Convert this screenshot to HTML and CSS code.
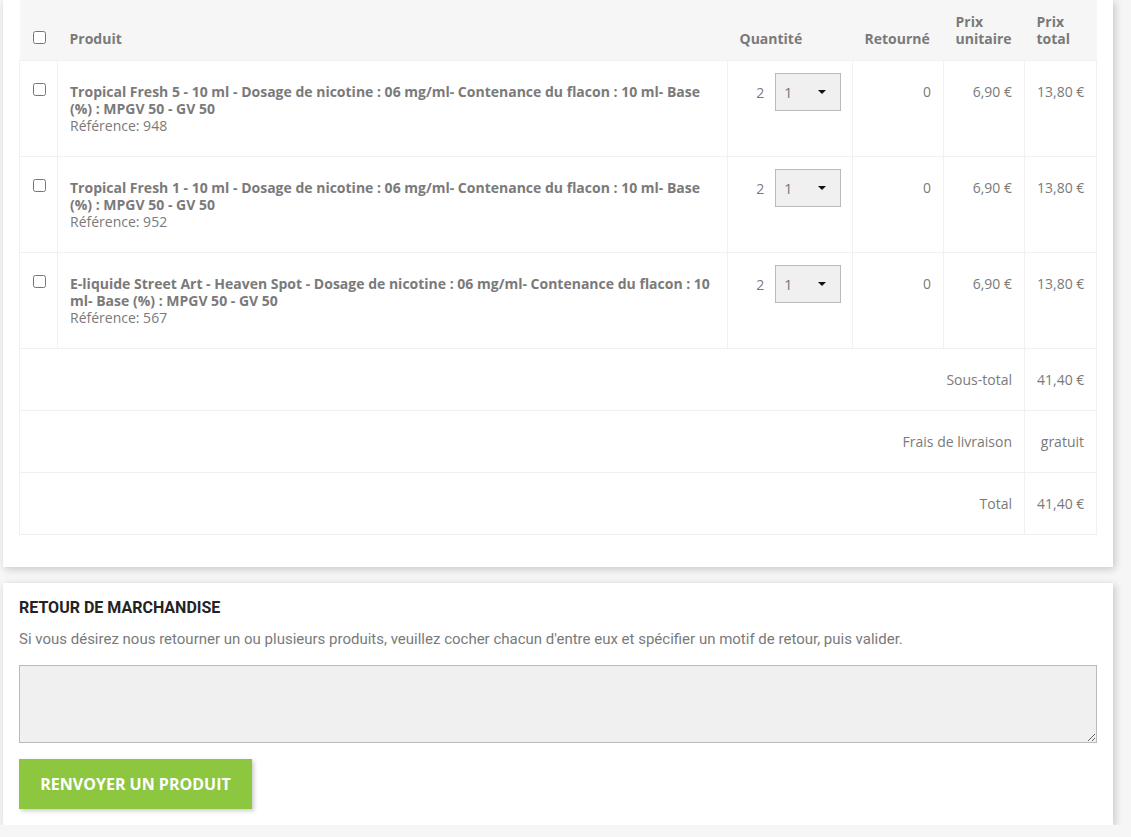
FILE: index.html
```html
<!DOCTYPE html>
<html lang="fr">
<head>
  <meta charset="UTF-8" />
  <meta name="viewport" content="width=device-width, initial-scale=1.0"/>
  <title>Détail de la commande</title>
  <link rel="stylesheet" href="styles.css">
</head>
<body>
  <div class="page">
    <div class="box order-box">
      <table class="order-table">
        <colgroup>
          <col class="col-check">
          <col>
          <col class="col-qty">
          <col class="col-ret">
          <col class="col-unit">
          <col class="col-total">
        </colgroup>
        <thead>
          <tr>
            <th class="check"><input type="checkbox"></th>
            <th>Produit</th>
            <th>Quantité</th>
            <th>Retourné</th>
            <th>Prix unitaire</th>
            <th>Prix total</th>
          </tr>
        </thead>
        <tbody>
          <tr class="item">
            <td class="check"><input type="checkbox"></td>
            <td class="product">
              <strong>Tropical Fresh 5 - 10 ml - Dosage de nicotine : 06 mg/ml- Contenance du flacon : 10 ml- Base (%) : MPGV 50 - GV 50</strong><br>
              Référence: 948
            </td>
            <td class="qty">
              <span class="qty-count">2</span>
              <span class="select-wrap">
                <select><option>1</option><option>2</option></select>
                <svg class="caret" width="8" height="4" viewBox="0 0 8 4"><path d="M0 0h8L4 4z"/></svg>
              </span>
            </td>
            <td class="num">0</td>
            <td class="num">6,90 €</td>
            <td class="num">13,80 €</td>
          </tr>
          <tr class="item">
            <td class="check"><input type="checkbox"></td>
            <td class="product">
              <strong>Tropical Fresh 1 - 10 ml - Dosage de nicotine : 06 mg/ml- Contenance du flacon : 10 ml- Base (%) : MPGV 50 - GV 50</strong><br>
              Référence: 952
            </td>
            <td class="qty">
              <span class="qty-count">2</span>
              <span class="select-wrap">
                <select><option>1</option><option>2</option></select>
                <svg class="caret" width="8" height="4" viewBox="0 0 8 4"><path d="M0 0h8L4 4z"/></svg>
              </span>
            </td>
            <td class="num">0</td>
            <td class="num">6,90 €</td>
            <td class="num">13,80 €</td>
          </tr>
          <tr class="item">
            <td class="check"><input type="checkbox"></td>
            <td class="product">
              <strong>E-liquide Street Art - Heaven Spot - Dosage de nicotine : 06 mg/ml- Contenance du flacon : 10 ml- Base (%) : MPGV 50 - GV 50</strong><br>
              Référence: 567
            </td>
            <td class="qty">
              <span class="qty-count">2</span>
              <span class="select-wrap">
                <select><option>1</option><option>2</option></select>
                <svg class="caret" width="8" height="4" viewBox="0 0 8 4"><path d="M0 0h8L4 4z"/></svg>
              </span>
            </td>
            <td class="num">0</td>
            <td class="num">6,90 €</td>
            <td class="num">13,80 €</td>
          </tr>
        </tbody>
        <tfoot>
          <tr class="line-total">
            <td colspan="5" class="label">Sous-total</td>
            <td class="num">41,40 €</td>
          </tr>
          <tr class="line-total">
            <td colspan="5" class="label">Frais de livraison</td>
            <td class="num">gratuit</td>
          </tr>
          <tr class="line-total">
            <td colspan="5" class="label">Total</td>
            <td class="num">41,40 €</td>
          </tr>
        </tfoot>
      </table>
    </div>

    <div class="box return-box">
      <h3>Retour de marchandise</h3>
      <p>Si vous désirez nous retourner un ou plusieurs produits, veuillez cocher chacun d'entre eux et spécifier un motif de retour, puis valider.</p>
      <textarea rows="3"></textarea>
      <button type="submit">Renvoyer un produit</button>
    </div>
  </div>
</body>
</html>
```

FILE: styles.css
```css
* { box-sizing: border-box; }

body {
  margin: 0;
  background-color: #f6f6f6;
  font-family: 'Open Sans', sans-serif;
  font-size: 14px;
  color: #7a7a7a;
}

.page {
  width: 1110px;
  margin-left: 3px;
}

.box {
  background: #fff;
  box-shadow: 2px 2px 8px 0 rgba(0, 0, 0, 0.2);
  padding: 16px;
}

.order-box {
  padding-top: 0;
  padding-bottom: 32px;
}

.order-table {
  width: 100%;
  border-collapse: collapse;
  table-layout: fixed;
  line-height: 17px;
}

.col-check { width: 38px; }
.col-qty { width: 125px; }
.col-ret { width: 91px; }
.col-unit { width: 81px; }
.col-total { width: 72px; }

.order-table th {
  background-color: #f6f6f6;
  height: 60px;
  padding: 0 12px 13px;
  text-align: left;
  vertical-align: bottom;
  font-weight: 700;
  color: #7a7a7a;
}

.order-table th.check,
.order-table td.check {
  padding-left: 13px;
  padding-right: 0;
}

.order-table input[type="checkbox"] {
  width: 13px;
  height: 13px;
  margin: 0;
  vertical-align: top;
}

.order-table th.check {
  padding-bottom: 12px;
}

.order-table td {
  border: 1px solid #f0f0f0;
  padding: 22px 12px;
  vertical-align: top;
}

.product strong {
  font-weight: 700;
}

.qty {
  text-align: right;
  white-space: nowrap;
  padding-top: 12px !important;
  padding-bottom: 0 !important;
  padding-right: 11px !important;
}

.qty-count {
  margin-right: 7px;
}

.select-wrap {
  position: relative;
  display: inline-block;
}

.select-wrap select {
  -webkit-appearance: none;
  appearance: none;
  width: 66px;
  height: 38px;
  padding: 0 8px;
  border: 1px solid #bbb;
  border-radius: 0;
  background: #f0f0f0;
  font-family: 'Open Sans', sans-serif;
  font-size: 15px;
  color: #7a7a7a;
}

.select-wrap .caret {
  position: absolute;
  right: 15px;
  top: 17px;
  fill: #111;
}

.num {
  text-align: right;
  white-space: nowrap;
}

.line-total .label {
  text-align: right;
}

.return-box {
  margin-top: 16px;
  font-family: Roboto, sans-serif;
}

.return-box h3 {
  margin: 0 0 12px;
  font-size: 16px;
  line-height: 18px;
  font-weight: 700;
  text-transform: uppercase;
  color: #232323;
}

.return-box p {
  margin: 0 0 16px;
  font-size: 15px;
  line-height: 20px;
  color: #7a7a7a;
}

.return-box textarea {
  display: block;
  width: 100%;
  height: 78px;
  border: 1px solid #bbb;
  background: #f0f0f0;
  margin-bottom: 16px;
}

.return-box button {
  width: 233px;
  height: 50px;
  border: none;
  background-color: #8dc63f;
  color: #fff;
  font-family: 'Open Sans', sans-serif;
  font-weight: 700;
  font-size: 16px;
  text-transform: uppercase;
  box-shadow: 2px 2px 4px rgba(0, 0, 0, 0.2);
  cursor: pointer;
}
```
